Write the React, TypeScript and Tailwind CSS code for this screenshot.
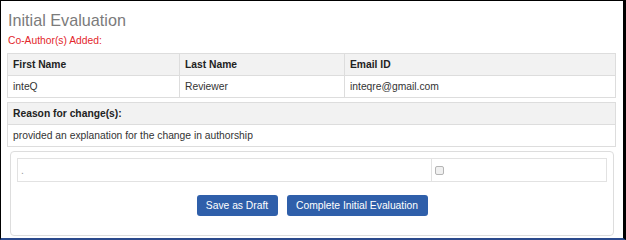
const cell = 'border border-[#dddddd] px-[5px] align-middle';

export default function App() {
  return (
    <div className="w-[626px] h-[240px] bg-white" style={{ fontFamily: '"Liberation Sans", Arial, sans-serif' }}>
      <div className="h-[240px] border-t border-l border-r-[3px] border-b-2 border-t-black border-l-black border-r-black border-b-[#2b4a8c] pl-[6px] pr-[6px] pt-[9px] text-[10.3px] text-[#333333]">
        <h1 className="text-[16.2px] leading-[20px] text-[#7b7b7b] pl-[1px]">Initial Evaluation</h1>
        <p className="mt-[4px] leading-[14px] text-[#e3262c] pl-[1px]">Co-Author(s) Added:</p>

        <table className="mt-[5px] w-[609px] border-collapse table-fixed">
          <colgroup>
            <col className="w-[172px]" />
            <col className="w-[165px]" />
            <col />
          </colgroup>
          <thead>
            <tr className="h-[22px] bg-[#f2f2f2] font-bold text-[#222222]">
              <th className={`${cell} text-left`}>First Name</th>
              <th className={`${cell} text-left`}>Last Name</th>
              <th className={`${cell} text-left`}>Email ID</th>
            </tr>
          </thead>
          <tbody>
            <tr className="h-[22px]">
              <td className={cell}>inteQ</td>
              <td className={cell}>Reviewer</td>
              <td className={cell}>inteqre@gmail.com</td>
            </tr>
          </tbody>
        </table>

        <table className="mt-[4px] w-[609px] border-collapse">
          <tbody>
            <tr className="h-[22px] bg-[#f2f2f2]">
              <th className={`${cell} text-left font-bold text-[#222222]`}>Reason for change(s):</th>
            </tr>
            <tr className="h-[22px]">
              <td className={cell}>provided an explanation for the change in authorship</td>
            </tr>
          </tbody>
        </table>

        <div className="mt-[4px] ml-[3px] w-[604px] h-[85px] rounded-[4px] border border-[#dddddd] px-[6px] pt-[6px]">
          <div className="flex h-[24px] border border-[#e2e2e2]">
            <div className="w-[414px] border-r border-[#e2e2e2] pl-[3px] text-[#999999] leading-[24px]">.</div>
            <div className="flex items-center pl-[3px]">
              <span className="block w-[9px] h-[9px] rounded-[2px] border border-[#b5b5b5] bg-[#f0f0f0]" />
            </div>
          </div>
          <div className="mt-[13px] flex justify-center gap-[9px]">
            <button className="h-[21px] w-[81px] rounded-[3px] bg-[#2f5faa] text-white text-[10.3px] leading-[21px]">Save as Draft</button>
            <button className="h-[21px] w-[141px] rounded-[3px] bg-[#2f5faa] text-white text-[10.3px] leading-[21px]">Complete Initial Evaluation</button>
          </div>
        </div>
      </div>
    </div>
  );
}
